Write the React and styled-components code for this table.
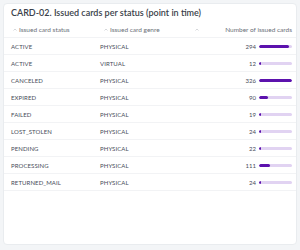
import React from 'react';
import styled, { createGlobalStyle } from 'styled-components';

const GlobalStyle = createGlobalStyle`
  html, body {
    margin: 0;
    padding: 0;
    background: #f3f5f7;
  }
  body {
    font-family: Lato, 'Liberation Sans', sans-serif;
  }
`;

const rows = [
  { status: 'ACTIVE', genre: 'PHYSICAL', count: 294 },
  { status: 'ACTIVE', genre: 'VIRTUAL', count: 12 },
  { status: 'CANCELED', genre: 'PHYSICAL', count: 326 },
  { status: 'EXPIRED', genre: 'PHYSICAL', count: 90 },
  { status: 'FAILED', genre: 'PHYSICAL', count: 19 },
  { status: 'LOST_STOLEN', genre: 'PHYSICAL', count: 24 },
  { status: 'PENDING', genre: 'PHYSICAL', count: 22 },
  { status: 'PROCESSING', genre: 'PHYSICAL', count: 111 },
  { status: 'RETURNED_MAIL', genre: 'PHYSICAL', count: 24 },
];

const max = Math.max(...rows.map(r => r.count));

const Page = styled.div`
  width: 300px;
  height: 250px;
  padding: 3px 3px 5px 3px;
  box-sizing: border-box;
`;

const Card = styled.div`
  height: 100%;
  background: #ffffff;
  border: 1px solid #e9ecef;
  border-radius: 4px;
  box-sizing: border-box;
  overflow: hidden;
`;

const Title = styled.div`
  padding: 3px 8px 0 7px;
  height: 15px;
  line-height: 11px;
  font-size: 9px;
  font-weight: 600;
  color: #3a3f4a;
  white-space: nowrap;
`;

const Row = styled.div`
  display: grid;
  grid-template-columns: 89px 90px 1fr;
  align-items: center;
  height: ${p => (p.$head ? 16 : 17)}px;
  padding: 0 4px 0 7px;
  border-bottom: 1px solid #f2f3f5;
  box-sizing: border-box;
`;

const HeadCell = styled.div`
  display: flex;
  align-items: center;
  justify-content: ${p => (p.$right ? 'space-between' : 'flex-start')};
  gap: 2px;
  font-size: 6.5px;
  color: #6b7078;
  white-space: nowrap;
  padding-left: ${p => p.$indent || 0}px;
`;

const Caret = () => (
  <svg width="4" height="3" viewBox="0 0 4 3">
    <path d="M0.5 2.5 L2 1 L3.5 2.5" fill="none" stroke="#c4c7cc" strokeWidth="0.7" />
  </svg>
);

const Cell = styled.div`
  font-size: 6px;
  color: #474c59;
  letter-spacing: 0.1px;
  white-space: nowrap;
`;

const CountCell = styled.div`
  display: flex;
  align-items: center;
  justify-content: flex-end;
  gap: 3px;
`;

const Count = styled.span`
  font-size: 6px;
  color: #474c59;
`;

const Track = styled.div`
  width: 33px;
  height: 3px;
  border-radius: 2px;
  background: #e1d3f2;
  overflow: hidden;
`;

const Fill = styled.div`
  height: 100%;
  border-radius: 2px;
  background: #5c12ad;
  min-width: 2px;
`;

export default function App() {
  return (
    <>
      <GlobalStyle />
      <Page>
        <Card>
          <Title>CARD-02. Issued cards per status (point in time)</Title>
          <Row $head>
            <HeadCell $indent={2}>
              <Caret />
              Issued card status
            </HeadCell>
            <HeadCell $indent={4}>
              <Caret />
              Issued card genre
            </HeadCell>
            <HeadCell $right $indent={5}>
              <Caret />
              <span>Number of issued cards</span>
            </HeadCell>
          </Row>
          {rows.map((r, i) => (
            <Row key={i}>
              <Cell>{r.status}</Cell>
              <Cell>{r.genre}</Cell>
              <CountCell>
                <Count>{r.count}</Count>
                <Track>
                  <Fill style={{ width: `${(r.count / max) * 100}%` }} />
                </Track>
              </CountCell>
            </Row>
          ))}
        </Card>
      </Page>
    </>
  );
}
